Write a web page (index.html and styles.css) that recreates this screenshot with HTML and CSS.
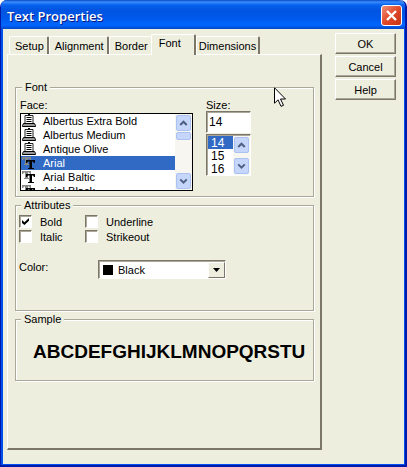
FILE: index.html
```html
<!DOCTYPE html>
<html lang="en">
<head>
<meta charset="utf-8">
<title>Text Properties</title>
<link rel="stylesheet" href="styles.css">
</head>
<body>
<svg class="defs" width="0" height="0" aria-hidden="true">
  <symbol id="printer" viewBox="0 0 14 14">
    <path d="M3 1.500h8v8H3z" fill="#fff" stroke="#222"/>
    <path d="M6 0.500h2M4.500 3.500h5M4.500 5.500h5M4.500 7.500h5" stroke="#000"/>
    <path d="M1.500 9.500h11l1 2v1H.500v-1z" fill="#999" stroke="#000"/>
  </symbol>
  <symbol id="truetype" viewBox="0 0 14 14">
    <path d="M0 1h9v3h-1l-1-1.500H6V8h1v1H2V8h1V2.500H2L1 4H0z" fill="#888"/>
    <path d="M4 4h9v3h-1l-1-1.500h-1V12h2v1H6v-1h1.500V5.500H6L5 7H4z" fill="#000"/>
  </symbol>
  <symbol id="up" viewBox="0 0 16 16"><path d="M4 10.500L8 6.500 12 10.500" fill="none" stroke="#4d6185" stroke-width="2.600"/></symbol>
  <symbol id="down" viewBox="0 0 16 16"><path d="M4 6L8 10 12 6" fill="none" stroke="#4d6185" stroke-width="2.600"/></symbol>
</svg>
<main class="window">
  <header class="titlebar">
    <h1>Text Properties</h1>
    <button class="close" type="button" aria-label="Close"><svg viewBox="0 0 19 19"><path d="M5 5l9 9M14 5l-9 9" stroke="#fff" stroke-width="2.400"/></svg></button>
  </header>
  <form class="content">
    <div class="tabbed">
      <div class="tabs" role="tablist">
        <button type="button" role="tab">Setup</button>
        <button type="button" role="tab">Alignment</button>
        <button type="button" role="tab">Border</button>
        <button type="button" role="tab" aria-selected="true">Font</button>
        <button type="button" role="tab">Dimensions</button>
      </div>
      <div class="panel" role="tabpanel">
        <fieldset class="font">
          <legend>Font</legend>
          <div class="face">
            <span id="face-label">Face:</span>
            <div class="list">
              <ul role="listbox" aria-labelledby="face-label">
                <li role="option"><svg><use href="#printer"/></svg>Albertus Extra Bold</li>
                <li role="option"><svg><use href="#printer"/></svg>Albertus Medium</li>
                <li role="option"><svg><use href="#printer"/></svg>Antique Olive</li>
                <li role="option" aria-selected="true"><svg><use href="#truetype"/></svg>Arial</li>
                <li role="option"><svg><use href="#truetype"/></svg>Arial Baltic</li>
                <li role="option"><svg><use href="#truetype"/></svg>Arial Black</li>
              </ul>
              <div class="scrollbar">
                <button type="button" aria-label="Scroll up"><svg><use href="#up"/></svg></button>
                <span class="thumb"></span>
                <button type="button" aria-label="Scroll down"><svg><use href="#down"/></svg></button>
              </div>
            </div>
          </div>
          <div class="size">
            <label for="size">Size:</label>
            <input id="size" type="text" value="14">
            <div class="list">
              <ul role="listbox" aria-label="Sizes">
                <li role="option" aria-selected="true">14</li>
                <li role="option">15</li>
                <li role="option">16</li>
              </ul>
              <div class="scrollbar">
                <button type="button" aria-label="Scroll up"><svg><use href="#up"/></svg></button>
                <button type="button" aria-label="Scroll down"><svg><use href="#down"/></svg></button>
              </div>
            </div>
          </div>
        </fieldset>
        <fieldset class="attributes">
          <legend>Attributes</legend>
          <div class="checks">
            <label><input type="checkbox" checked>Bold</label>
            <label><input type="checkbox">Underline</label>
            <label><input type="checkbox">Italic</label>
            <label><input type="checkbox">Strikeout</label>
          </div>
          <div class="color">
            <label for="color">Color:</label>
            <div class="combo">
              <select id="color"><option>Black</option></select>
              <span class="swatch"></span>
              <span class="arrow"><svg viewBox="0 0 7 4"><path d="M0 0h7L3.500 4z"/></svg></span>
            </div>
          </div>
        </fieldset>
        <fieldset class="sample">
          <legend>Sample</legend>
          <p>ABCDEFGHIJKLMNOPQRSTU</p>
        </fieldset>
      </div>
    </div>
    <div class="actions">
      <button type="submit">OK</button>
      <button type="button">Cancel</button>
      <button type="button">Help</button>
    </div>
  </form>
  <svg class="pointer" viewBox="0 0 12 20" aria-hidden="true"><path d="M.5.800v15.500l3.500-3.500 3 6.500 2.500-1-3-6.300H11.500z" fill="#fff" stroke="#000"/></svg>
</main>
</body>
</html>
```
FILE: styles.css
```css
* { box-sizing: border-box; }

body {
  margin: 0;
  background: #fff;
  color: #000;
  font: 11px/14px "Liberation Sans", Arial, sans-serif;
}

button, input, select { font: inherit; color: inherit; }
ul { list-style: none; margin: 0; padding: 0; }
svg { display: block; }
.defs { position: absolute; }

.window {
  position: relative;
  display: flex;
  flex-direction: column;
  min-height: 100vh;
  background: #eeeede;
  border: solid #0019a8;
  border-width: 0 2px 2px 1px;
  border-radius: 7px 7px 0 0;
  box-shadow: inset 2px 0 #0050ee, inset -1px -1px #0050ee;
}

.titlebar {
  display: flex;
  align-items: center;
  justify-content: space-between;
  height: 29px;
  padding: 2px 3px 0 6px;
  border-radius: 6px 6px 0 0;
  background: linear-gradient(#0a48c4 0, #3c8cff 2px, #0762ee 5px, #0054e0 10px, #0058ea 18px, #0066ff 25px, #0048c8 29px);
}

.titlebar h1 {
  margin: 0;
  color: #fff;
  font: 600 13px/18px "Open Sans", sans-serif;
  text-shadow: 1px 1px #0a1883;
}

.close {
  width: 21px;
  height: 21px;
  padding: 0;
  border: 1px solid #fff;
  border-radius: 3px;
  background: linear-gradient(135deg, #f0907a, #e0492a 50%, #c23412);
}

.content {
  flex: 1;
  display: flex;
  gap: 13px;
  padding: 4px 9px 15px 6px;
}

.tabbed {
  flex: 1;
  display: flex;
  flex-direction: column;
}

.tabs {
  display: flex;
  align-items: flex-end;
  height: 21px;
  padding-left: 2px;
}

.tabs button {
  height: 18px;
  padding: 0 3px 0 5px;
  background: #eeeede;
  border: 1px solid #fff;
  border-right: 2px solid #7b7668;
  border-bottom: 0;
  border-radius: 2px 2px 0 0;
}

.tabs button:nth-child(3) { border-right: 0; }
.tabs button:last-child { padding: 0 2px; }

.tabs [aria-selected="true"] {
  height: 21px;
  margin-bottom: -1px;
  padding: 0 13px 4px 7px;
  z-index: 1;
}

.panel {
  flex: 1;
  display: flex;
  flex-direction: column;
  gap: 1px;
  padding: 25px 6px 8px 7px;
  border: 1px solid #fff;
  border-right: 2px solid #7b7668;
  border-bottom: 2px solid #7b7668;
}

fieldset {
  min-width: 0;
  margin: 0;
  padding: 0 3px;
  border: 1px solid #aca899;
  box-shadow: 1px 1px #fff, inset 1px 1px #fff;
}

legend {
  margin-left: 2px;
  padding: 0 3px;
  background: #eeeede;
}

.font {
  display: flex;
  align-items: flex-start;
  gap: 13px;
  height: 117px;
  padding: 4px 4px 0;
}

.face { width: 173px; }
.size { width: 45px; }

.face > span {
  display: block;
  height: 15px;
}

.size > label {
  display: block;
  height: 13px;
}

.list {
  display: flex;
  height: 78px;
  background: #fff;
  border: 1px solid #000;
  overflow: hidden;
}

.list ul { flex: 1; overflow: hidden; }

.list li {
  display: flex;
  align-items: center;
  gap: 7px;
  height: 14px;
  padding-left: 1px;
}

.list li svg { width: 14px; height: 14px; }
.list [aria-selected="true"] { background: #316ac5; color: #fff; }

.scrollbar {
  display: flex;
  flex-direction: column;
  width: 17px;
  padding: 1px;
  background: #f7f6f0;
}

.scrollbar button {
  height: 16px;
  padding: 0;
  border: 1px solid #a9c2f2;
  border-radius: 2px;
  background: #c6d6fb;
}

.scrollbar button:last-child { margin-top: auto; }
.scrollbar svg { width: 100%; height: 14px; }
.scrollbar use { width: 100%; height: 100%; }

.thumb {
  height: 8px;
  margin-top: 1px;
  border: 1px solid #a9c2f2;
  border-radius: 2px;
  background: #c6d6fb;
}

.size input, .size .list, .checks input, .combo select {
  border: 1px solid;
  border-color: #7b7668 #fff #fff #7b7668;
  border-radius: 0;
  background: #fff;
  box-shadow: inset 1px 1px #aca899;
}

.size input {
  display: block;
  width: 100%;
  height: 22px;
  margin-bottom: 1px;
  padding: 2px;
  font-size: 12px;
}

.size .list { height: 42px; padding: 1px 0 0 1px; }
.size li { height: 13px; padding-left: 3px; font-size: 12px; }

.attributes { height: 113px; padding: 3px 3px 0; }

.checks {
  display: grid;
  grid-template-columns: 66px 1fr;
  row-gap: 2px;
}

.checks label {
  display: flex;
  align-items: center;
  gap: 8px;
  height: 13px;
}

.checks input {
  appearance: none;
  width: 13px;
  height: 13px;
  margin: 0;
}

.checks input:checked::after {
  content: "";
  display: block;
  width: 7px;
  height: 7px;
  margin: 2px;
  background: #000;
  clip-path: polygon(0 30%, 35% 60%, 100% 0, 100% 40%, 35% 100%, 0 70%);
}

.color {
  display: flex;
  align-items: flex-start;
  margin-top: 17px;
}

.color label { width: 79px; }

.combo { position: relative; width: 128px; }

.combo select {
  appearance: none;
  display: block;
  width: 100%;
  height: 19px;
  padding: 0 20px 0 19px;
}

.swatch {
  position: absolute;
  left: 5px;
  top: 5px;
  width: 10px;
  height: 10px;
  background: #000;
}

.arrow {
  position: absolute;
  right: 1px;
  top: 2px;
  display: grid;
  place-items: center;
  width: 17px;
  height: 16px;
  background: #eeeede;
  border: 1px solid;
  border-color: #fff #7b7668 #7b7668 #fff;
  pointer-events: none;
}

.arrow svg { width: 7px; height: 4px; }

.sample { height: 69px; }

.sample p {
  margin: 15px 0 0 14px;
  font: bold 19px/22px "Liberation Sans", Arial, sans-serif;
  white-space: nowrap;
}

.actions {
  display: flex;
  flex-direction: column;
  gap: 2px;
  width: 61px;
}

.actions button {
  height: 21px;
  padding: 0;
  background: #eeeede;
  border: 1px solid;
  border-color: #fff #7b7668 #7b7668 #fff;
  box-shadow: inset -1px -1px #aca899;
}

.pointer {
  position: absolute;
  left: 273px;
  top: 87px;
  width: 12px;
  height: 20px;
}
```
